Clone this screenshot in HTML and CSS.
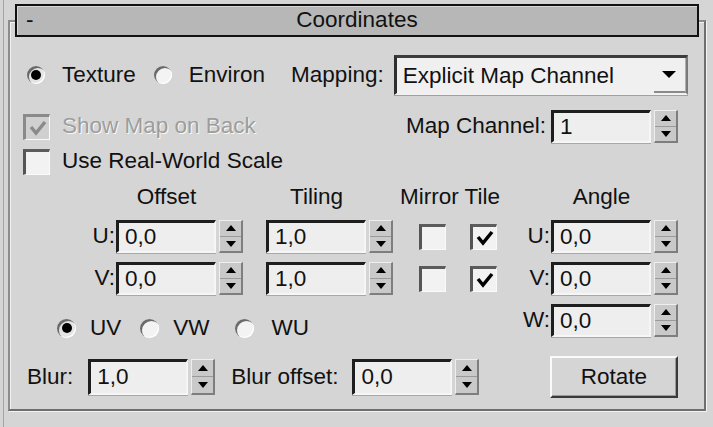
FILE: index.html
```html
<!DOCTYPE html>
<html>
<head>
<meta charset="utf-8">
<link rel="stylesheet" href="styles.css">
</head>
<body>
<div class="page">
  <div class="frame">
    <div class="titlebar">
      <span class="minus">-</span>
      <span class="title">Coordinates</span>
      <span class="title-pad"></span>
    </div>

    <div class="row r1">
      <span class="radio on"></span><span class="lbl l-texture">Texture</span>
      <span class="radio r-env"></span><span class="lbl l-env">Environ</span>
      <span class="lbl l-mapping">Mapping:</span>
      <div class="dropdown">
        <span class="dd-text">Explicit Map Channel</span>
        <span class="dd-btn"><svg width="14" height="8" viewBox="0 0 14 8"><polygon points="0,0 14,0 7,7" fill="#000"/></svg></span>
      </div>
    </div>

    <div class="row r2">
      <span class="check disabled"><svg width="20" height="20" viewBox="0 0 20 20"><polyline points="3,9 8,15 17,4" fill="none" stroke="#8a8a8a" stroke-width="3.5"/></svg></span>
      <span class="lbl dis">Show Map on Back</span>
      <span class="lbl l-mapch">Map Channel:</span>
      <div class="spin">
        <span class="spin-in">1</span>
        <span class="spin-btn"><span class="up"></span><span class="dn"></span></span>
      </div>
    </div>

    <div class="row r3">
      <span class="check"></span>
      <span class="lbl">Use Real-World Scale</span>
    </div>

    <div class="grid">
      <span class="hdr h-offset">Offset</span>
      <span class="hdr h-tiling">Tiling</span>
      <span class="hdr h-mirror">Mirror Tile</span>
      <span class="hdr h-angle">Angle</span>

      <span class="glbl c1 ru">U:</span>
      <div class="spin c2 ru"><span class="spin-in">0,0</span><span class="spin-btn"><span class="up"></span><span class="dn"></span></span></div>
      <div class="spin c4 ru"><span class="spin-in">1,0</span><span class="spin-btn"><span class="up"></span><span class="dn"></span></span></div>
      <span class="check c6 ru"></span>
      <span class="check c8 ru"><svg width="20" height="20" viewBox="0 0 20 20"><polyline points="3,9 8,15 17,4" fill="none" stroke="#000" stroke-width="3.5"/></svg></span>
      <span class="glbl c9 ru">U:</span>
      <div class="spin c10 ru"><span class="spin-in">0,0</span><span class="spin-btn"><span class="up"></span><span class="dn"></span></span></div>

      <span class="glbl c1 rv">V:</span>
      <div class="spin c2 rv"><span class="spin-in">0,0</span><span class="spin-btn"><span class="up"></span><span class="dn"></span></span></div>
      <div class="spin c4 rv"><span class="spin-in">1,0</span><span class="spin-btn"><span class="up"></span><span class="dn"></span></span></div>
      <span class="check c6 rv"></span>
      <span class="check c8 rv"><svg width="20" height="20" viewBox="0 0 20 20"><polyline points="3,9 8,15 17,4" fill="none" stroke="#000" stroke-width="3.5"/></svg></span>
      <span class="glbl c9 rv">V:</span>
      <div class="spin c10 rv"><span class="spin-in">0,0</span><span class="spin-btn"><span class="up"></span><span class="dn"></span></span></div>

      <div class="uvw rw">
        <span class="radio on"></span><span class="lbl l-uv">UV</span>
        <span class="radio"></span><span class="lbl l-vw">VW</span>
        <span class="radio"></span><span class="lbl l-wu">WU</span>
      </div>
      <span class="glbl c9 rw">W:</span>
      <div class="spin c10 rw"><span class="spin-in">0,0</span><span class="spin-btn"><span class="up"></span><span class="dn"></span></span></div>
    </div>

    <div class="row r5">
      <span class="lbl l-blur">Blur:</span>
      <div class="spin tall"><span class="spin-in">1,0</span><span class="spin-btn"><span class="up"></span><span class="dn"></span></span></div>
      <span class="lbl l-bluroff">Blur offset:</span>
      <div class="spin tall"><span class="spin-in">0,0</span><span class="spin-btn"><span class="up"></span><span class="dn"></span></span></div>
      <button class="btn">Rotate</button>
    </div>
  </div>
</div>
</body>
</html>
```

FILE: styles.css
```css
html, body {
  margin: 0;
  padding: 0;
}
body {
  width: 713px;
  height: 427px;
  overflow: hidden;
  background: #d5d5d5;
  font-family: "Liberation Sans", Arial, sans-serif;
  font-size: 22.5px;
  line-height: 1;
  color: #111;
}
.page {
  height: 427px;
  box-sizing: border-box;
  padding-top: 20px;
  border-left: 1px solid #a4a4a4;
  margin-left: 3px;
}
.frame {
  box-sizing: border-box;
  margin-left: 4px;
  width: 698px;
  height: 391px;
  border: 2px solid;
  border-color: #8c8c8c #6e6e6e #6e6e6e #8c8c8c;
  box-shadow: inset 1px 1px #f2f2f2, 1px 1px #f2f2f2;
}
.titlebar {
  box-sizing: border-box;
  height: 33px;
  margin: -18px 5px 0 5px;
  border: 2px solid #111;
  background: #b7b7b7;
  box-shadow: inset 1px 1px #d8d8d8;
  display: flex;
  align-items: center;
}
.minus {
  width: 60px;
  padding-left: 9px;
  box-sizing: border-box;
}
.title {
  flex: 1;
  text-align: center;
}
.title-pad {
  width: 60px;
}

.row {
  display: flex;
  align-items: center;
}
.lbl {
  white-space: nowrap;
}
.dis {
  color: #9d9d9d;
  text-shadow: 1px 1px 0 #f8f8f8;
}

/* radio */
.radio {
  flex: none;
  width: 18px;
  height: 18px;
  border-radius: 50%;
  background: #f3f3f3;
  box-shadow: inset 2px 2px 0 #6a6a6a, inset -1px -1px 0 #ffffff;
  display: flex;
  align-items: center;
  justify-content: center;
}
.radio.on {
  background: #e4e4e4;
}
.radio.on::after {
  content: "";
  width: 10px;
  height: 10px;
  border-radius: 50%;
  background: #000;
}

/* checkbox */
.check {
  flex: none;
  box-sizing: border-box;
  width: 27px;
  height: 26px;
  border-top: 3px solid #5c5c5c;
  border-left: 3px solid #555;
  border-right: 1px solid #fafafa;
  border-bottom: 1px solid #fafafa;
  background: #f2f2f2;
  display: flex;
  align-items: center;
  justify-content: center;
}
.check.disabled {
  background: #d0d0d0;
  border-top-color: #8a8a8a;
  border-left-color: #8a8a8a;
}

/* row 1 */
.r1 {
  margin-top: 18px;
  height: 40px;
  padding-left: 17px;
}
.l-texture {
  margin-left: 17px;
}
.r-env {
  margin-left: 18px;
}
.l-env {
  margin-left: 17px;
}
.l-mapping {
  margin-left: 26px;
}
.dropdown {
  margin-left: 10px;
  box-sizing: border-box;
  width: 294px;
  height: 40px;
  border-top: 3px solid #3c3c3c;
  border-left: 3px solid #2e2e2e;
  border-right: 2px solid #7a7a7a;
  border-bottom: 2px solid #f2f2f2;
  box-shadow: 0 1px 0 #a0a0a0;
  background: #f0f0f0;
  display: flex;
  align-items: center;
}
.dd-text {
  flex: 1;
  padding-left: 6px;
  line-height: 1.2;
  white-space: nowrap;
}
.dd-btn {
  width: 32px;
  height: 100%;
  box-sizing: border-box;
  border-bottom: 2px solid #8a8a8a;
  border-right: 1px solid #b0b0b0;
  display: flex;
  align-items: center;
  justify-content: center;
}

/* row 2 */
.r2 {
  margin-top: 15px;
  height: 33px;
  padding-left: 13px;
  padding-right: 26px;
}
.r2 .dis {
  margin-left: 12px;
}
.l-mapch {
  margin-left: auto;
  margin-right: 5px;
}

/* row 3 */
.r3 {
  margin-top: 5px;
  height: 27px;
  padding-left: 13px;
}
.r3 .lbl {
  margin-left: 12px;
}

/* spinner */
.spin {
  display: flex;
  height: 33px;
}
.spin.tall {
  height: 36px;
}
.spin-in {
  box-sizing: border-box;
  width: 100px;
  border-top: 3px solid #1e1e1e;
  border-left: 3px solid #1e1e1e;
  border-right: 2px solid #f6f6f6;
  border-bottom: 2px solid #f6f6f6;
  box-shadow: 0 1px 0 #a8a8a8;
  background: #eeeeee;
  padding-left: 6px;
  display: flex;
  align-items: center;
}
.spin-btn {
  box-sizing: border-box;
  width: 24px;
  margin-left: 3px;
  display: flex;
  flex-direction: column;
  background: #c9c9c9;
  border-top: 1px solid #efefef;
  border-left: 1px solid #efefef;
  border-right: 2px solid #7e7e7e;
  border-bottom: 2px solid #7e7e7e;
}
.spin-btn .up,
.spin-btn .dn {
  flex: 1;
  display: flex;
  align-items: center;
  justify-content: center;
}
.spin-btn .up {
  border-bottom: 1px solid #9a9a9a;
}
.spin-btn .up::after {
  content: "";
  border-left: 5px solid transparent;
  border-right: 5px solid transparent;
  border-bottom: 6px solid #000;
}
.spin-btn .dn::after {
  content: "";
  border-left: 5px solid transparent;
  border-right: 5px solid transparent;
  border-top: 6px solid #000;
}

/* grid */
.grid {
  display: grid;
  grid-template-columns: 106px 128px 22px 128px 24px 28px 23px 28px 54px 128px;
  grid-template-rows: 29px 33px 33px 33px;
  row-gap: 9px;
  margin-top: 7px;
}
.hdr {
  grid-row: 1;
  align-self: end;
  padding-bottom: 3px;
  white-space: nowrap;
}
.h-offset {
  grid-column: 2;
  text-align: center;
  padding-right: 27px;
}
.h-tiling {
  grid-column: 4;
  text-align: center;
  padding-right: 27px;
}
.h-mirror {
  grid-column: 5 / 9;
  justify-self: end;
  margin-right: -3px;
}
.h-angle {
  grid-column: 10;
  text-align: center;
  padding-right: 27px;
}
.glbl {
  align-self: center;
  text-align: right;
  padding-right: 1px;
}
.c1 { grid-column: 1; }
.c2 { grid-column: 2; }
.c4 { grid-column: 4; }
.c6 { grid-column: 6; }
.c8 { grid-column: 8; }
.c9 { grid-column: 9; }
.c10 { grid-column: 10; }
.ru { grid-row: 2; }
.rv { grid-row: 3; }
.rw { grid-row: 4; }
.grid .check {
  align-self: center;
  justify-self: start;
  margin-left: 1px;
}
.uvw {
  grid-column: 1 / 9;
  align-self: end;
  margin-bottom: -4px;
  padding-left: 47px;
  display: flex;
  align-items: center;
  height: 26px;
}
.uvw .radio {
  width: 19px;
  height: 19px;
}
.uvw .l-uv {
  margin-left: 14px;
  margin-right: 19px;
}
.uvw .l-vw {
  margin-left: 14px;
  margin-right: 25px;
}
.uvw .l-wu {
  margin-left: 18px;
}

/* row 5 */
.r5 {
  margin-top: 19px;
  height: 42px;
  padding-left: 17px;
  padding-right: 26px;
}
.l-blur {
  margin-right: 15px;
}
.l-bluroff {
  margin-left: 16px;
  margin-right: 14px;
}
.btn {
  margin-left: auto;
  width: 128px;
  height: 42px;
  box-sizing: border-box;
  font: inherit;
  color: #111;
  background: #d5d5d5;
  border: 2px solid;
  border-color: #fafafa #3a3a3a #3a3a3a #fafafa;
  box-shadow: inset -1px -1px 0 #9a9a9a;
  padding: 0;
}
```
